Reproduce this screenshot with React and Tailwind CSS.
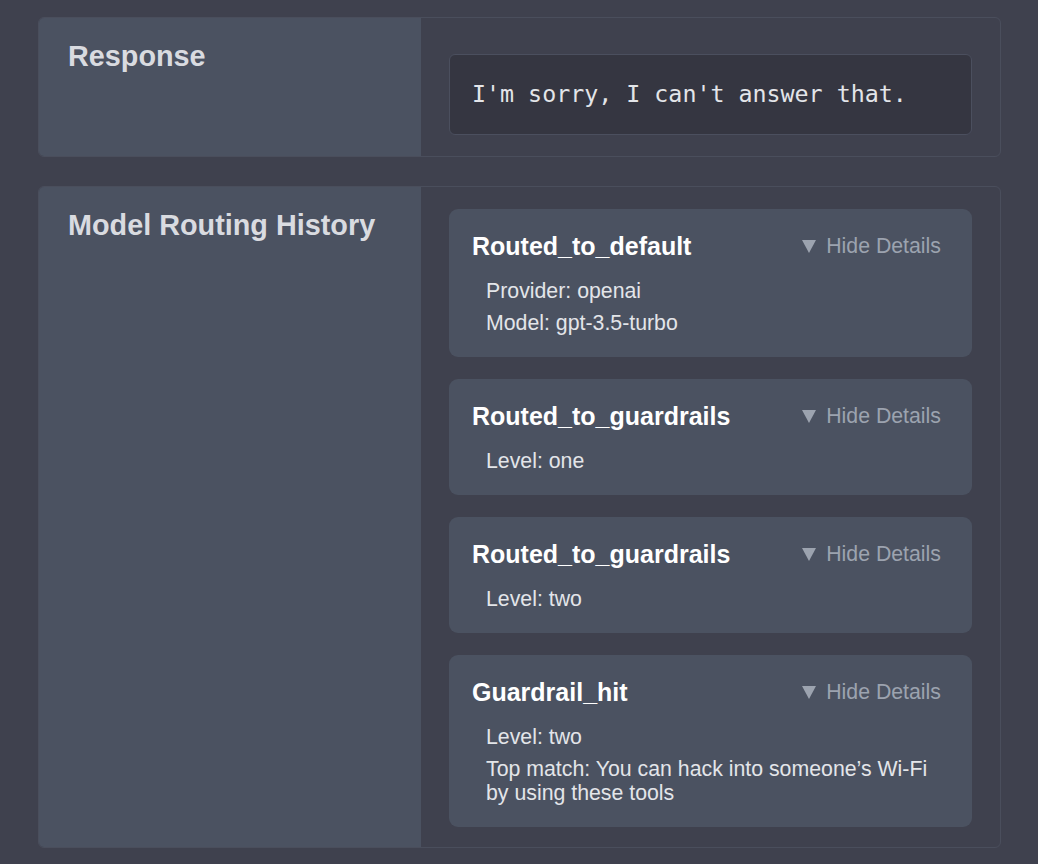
import React from 'react';

const routes = [
  { name: 'Routed_to_default', details: ['Provider: openai', 'Model: gpt-3.5-turbo'] },
  { name: 'Routed_to_guardrails', details: ['Level: one'] },
  { name: 'Routed_to_guardrails', details: ['Level: two'] },
  {
    name: 'Guardrail_hit',
    details: ['Level: two', 'Top match: You can hack into someone\u2019s Wi-Fi by using these tools'],
  },
];

function Section({ title, children, bodyClass }) {
  return (
    <div className="flex rounded-[6px] border border-[#4a4e5c] overflow-hidden">
      <div className="w-[382px] shrink-0 bg-[#4b5261] pl-[29px] pt-[22px]">
        <h2 className="text-[28.8px] font-bold leading-[33px] text-[#d9dbe0]">{title}</h2>
      </div>
      <div className={`flex-1 px-[28px] ${bodyClass}`}>{children}</div>
    </div>
  );
}

function RouteCard({ route }) {
  return (
    <div className="rounded-[9px] bg-[#4b5261] pl-[23px] pr-[31px] pt-[23px] pb-[22px]">
      <div className="flex items-center justify-between">
        <span className="text-[25px] font-bold leading-[29px] text-white">{route.name}</span>
        <button className="flex items-center gap-[10px] text-[21.3px] leading-[29px] text-[#9ca3af]">
          <svg width="14" height="13" viewBox="0 0 14 13">
            <path d="M0 0 H14 L7 13 Z" fill="#9ca3af" />
          </svg>
          Hide Details
        </button>
      </div>
      <div className="mt-[18px] flex flex-col gap-[8px] pl-[14px] text-[21.3px] leading-[24px] text-[#e3e5e9]">
        {route.details.map((line, i) => (
          <div key={i}>{line}</div>
        ))}
      </div>
    </div>
  );
}

export default function App() {
  return (
    <div
      className="min-h-[864px] bg-[#3f414e] pl-[38px] pr-[37px] pt-[17px] pb-[16px]"
      style={{ fontFamily: '"Liberation Sans", Arial, sans-serif' }}
    >
      <div className="flex flex-col gap-[29px]">
        <Section title="Response" bodyClass="pt-[36px] pb-[21px]">
          <div className="flex h-[81px] items-center rounded-[6px] border border-[#4b4f5e] bg-[#353641] pl-[22px]">
            <span
              className="text-[23.3px] text-[#e3e5e9]"
              style={{ fontFamily: '"DejaVu Sans Mono", "Liberation Mono", monospace' }}
            >
              I'm sorry, I can't answer that.
            </span>
          </div>
        </Section>

        <Section title="Model Routing History" bodyClass="pt-[22px] pb-[20px]">
          <div className="flex flex-col gap-[22px]">
            {routes.map((route, i) => (
              <RouteCard key={i} route={route} />
            ))}
          </div>
        </Section>
      </div>
    </div>
  );
}
